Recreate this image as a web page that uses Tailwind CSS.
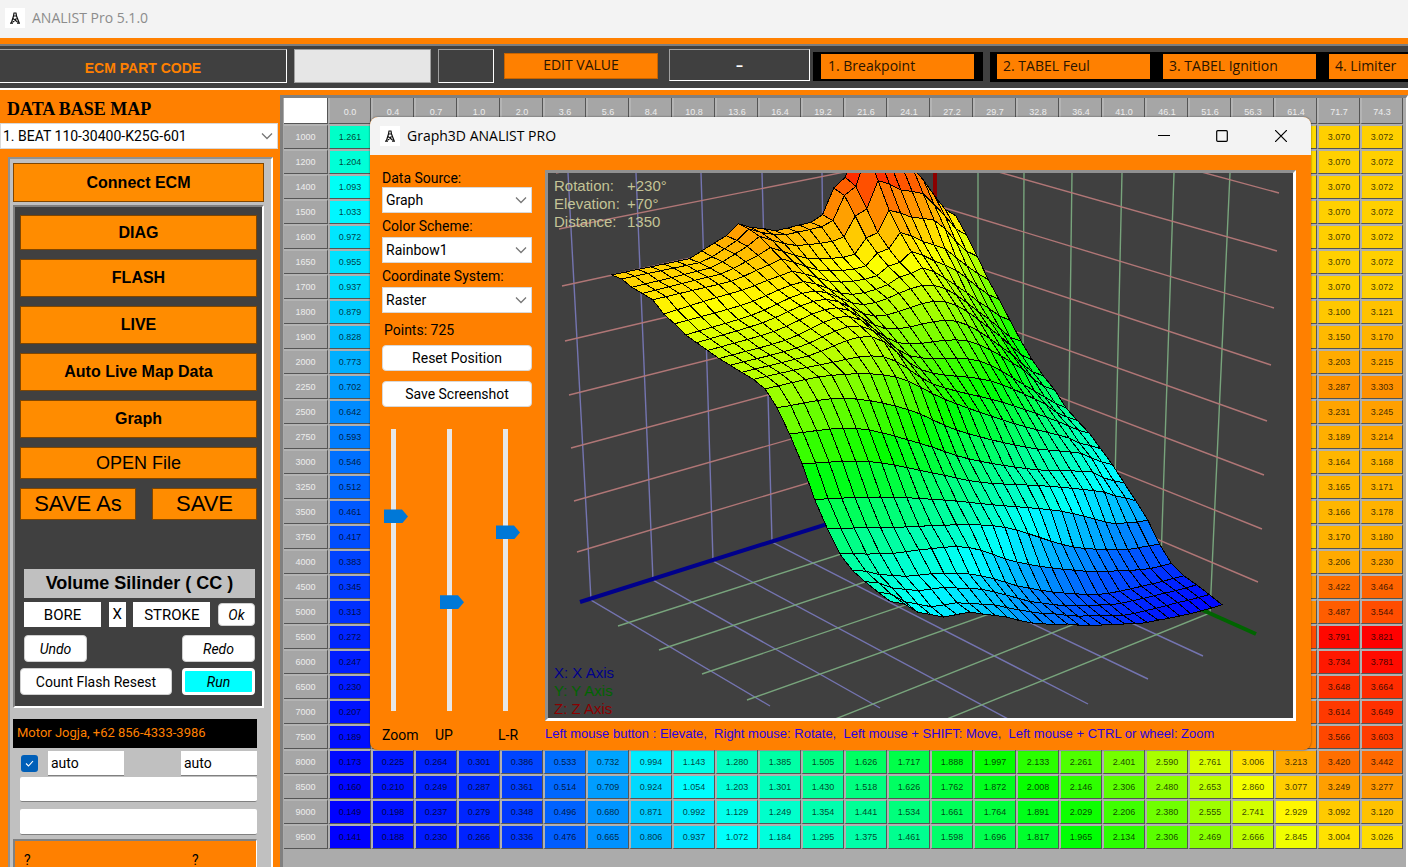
<!DOCTYPE html>
<html lang="en">
<head>
    <meta charset="UTF-8">
    <meta name="viewport" content="width=device-width, initial-scale=1.0">
    <title>ANALIST Pro 5.1.0</title>
    <script src="https://cdn.jsdelivr.net/npm/@tailwindcss/browser@4"></script>
</head>
<body class="relative h-screen overflow-hidden flex flex-col bg-[#ff8000] font-['Roboto',sans-serif] text-sm text-black">

    <!-- Shared icons -->
    <svg class="hidden">
        <symbol id="logo" viewBox="0 0 20 20">
            <path d="M0 0h20v20H0z" fill="#fff"/>
            <path d="M8.500 5h3M9 5l-.5 3h3L11 5M8.500 8L6.500 14.500M11.500 8l2.500 6.500M8 10.500l4.500 3.500M11.500 10.500L8 14M5 15.200h3M12 15.200h3" fill="none" stroke="#111" stroke-width="1.200"/>
        </symbol>
        <symbol id="chevron" viewBox="0 0 12 8">
            <path d="M1 1.500l5 5 5-5" fill="none" stroke="#777" stroke-width="1.300"/>
        </symbol>
    </svg>

    <!-- Title bar -->
    <header class="h-[38px] shrink-0 flex items-start gap-[7px] pl-[5px] pt-2 bg-[#f3f3f3] font-['Open_Sans',sans-serif] text-[#8c8c8c]">
        <svg class="size-5"><use href="#logo"/></svg>
        <h1 class="leading-5">ANALIST Pro 5.1.0</h1>
    </header>

    <!-- Toolbar -->
    <nav class="mt-[6px] h-[46px] shrink-0 flex items-start overflow-hidden bg-[#404040] border-t-2 border-t-[#7d7d7d] border-b-2 border-b-white pt-[3px] font-['Open_Sans',sans-serif]">
        <div class="w-[287px] h-[34px] shrink-0 flex items-center justify-center border-t border-t-[#a0a0a0] border-r border-b border-white font-['Liberation_Sans',sans-serif] font-bold text-[#ff8000] pt-1">ECM PART CODE</div>
        <input type="text" aria-label="Part code" class="ml-[7px] w-[137px] h-[34px] shrink-0 bg-[#e6e6e6] border border-[#a0a0a0]">
        <div class="ml-[7px] w-[56px] h-[34px] shrink-0 border border-[#a0a0a0] border-r-white border-b-white"></div>
        <button class="ml-[10px] mt-1 w-[154px] h-[26px] shrink-0 bg-[#ff8000] border border-[#c86400] pb-[2px] text-[#2a1400]">EDIT VALUE</button>
        <div class="ml-[11px] w-[141px] h-[32px] shrink-0 flex items-center justify-center border border-[#a0a0a0] border-r-white border-b-white text-white font-bold">–</div>
        <div class="ml-[3px] mt-[3px] shrink-0 bg-black pl-2 pr-[9px] pt-[2px] h-[29px]">
            <button class="w-[153px] h-[25px] bg-[#ff8000] text-left pl-[7px] pb-[2px] text-[#2a1400]">1. Breakpoint</button>
        </div>
        <div class="ml-[7px] mt-[3px] shrink-0 bg-black pl-[7px] pt-[2px] h-[30px] flex gap-[13px]">
            <button class="w-[153px] h-[25px] bg-[#ff8000] text-left pl-[6px] pb-[2px] text-[#2a1400]">2. TABEL Feul</button>
            <button class="w-[153px] h-[25px] bg-[#ff8000] text-left pl-[6px] pb-[2px] text-[#2a1400]">3. TABEL Ignition</button>
            <button class="w-[153px] h-[25px] bg-[#ff8000] text-left pl-[6px] pb-[2px] text-[#2a1400]">4. Limiter</button>
        </div>
    </nav>

    <div class="flex-1 min-h-0 flex pt-[5px]">
        <!-- Sidebar -->
        <aside class="w-[280px] shrink-0 overflow-hidden">
            <h2 class="h-7 pl-[7px] flex items-center font-['Liberation_Serif',serif] font-bold text-lg">DATA BASE MAP</h2>
            <div class="relative w-[278px]">
                <select aria-label="Data base map" class="w-full h-[26px] appearance-none bg-white border border-[#d8d8d8] pl-[2px] text-sm leading-6">
                    <option>1. BEAT 110-30400-K25G-601</option>
                </select>
                <svg class="absolute right-[5px] top-[9px] w-3 h-2 pointer-events-none"><use href="#chevron"/></svg>
            </div>

            <div class="mt-2 ml-2 w-[265px] bg-[#c0c0c0] border-t-2 border-l-2 border-[#909090] border-r-2 border-r-white pt-1 pl-[3px] pr-2">
                <button class="block w-[251px] h-[39px] bg-[#ff8c00] border border-[#804600] font-['Liberation_Sans',sans-serif] text-base font-bold">Connect ECM</button>

                <div class="mt-[3px] w-[251px] h-[503px] bg-[#404040] border-t-2 border-l-2 border-[#808080] border-r-2 border-b-2 border-r-white border-b-white pt-2 pl-[5px] pr-[5px]">
                    <div class="flex flex-col gap-[9px] font-['Liberation_Sans',sans-serif] text-base font-bold">
                        <button class="h-[35px] bg-[#ff8c00] border border-[#804600]">DIAG</button>
                        <button class="h-[38px] bg-[#ff8c00] border border-[#804600]">FLASH</button>
                        <button class="h-[38px] bg-[#ff8c00] border border-[#804600]">LIVE</button>
                        <button class="h-[38px] bg-[#ff8c00] border border-[#804600]">Auto Live Map Data</button>
                        <button class="h-[38px] bg-[#ff8c00] border border-[#804600]">Graph</button>
                        <button class="h-[32px] bg-[#ff8c00] border border-[#804600] text-lg font-normal leading-7">OPEN File</button>
                        <div class="flex justify-between text-[22px] font-normal">
                            <button class="w-[116px] h-[32px] bg-[#ff8c00] border border-[#804600] leading-7">SAVE As</button>
                            <button class="w-[105px] h-[32px] bg-[#ff8c00] border border-[#804600] leading-7">SAVE</button>
                        </div>
                    </div>

                    <div class="mt-[49px] ml-1 mr-[2px]">
                        <h3 class="h-[29px] leading-7 bg-[#c0c0c0] text-center font-['Liberation_Sans',sans-serif] text-lg font-bold">Volume Silinder ( CC )</h3>
                        <div class="mt-1 flex items-center justify-between text-[15px]">
                            <input type="text" aria-label="Bore" value="BORE" class="w-[77px] h-[25px] bg-white text-center">
                            <span class="w-[17px] h-[25px] leading-6 bg-white text-center">X</span>
                            <input type="text" aria-label="Stroke" value="STROKE" class="w-[77px] h-[25px] bg-white text-center">
                            <button class="w-[37px] h-[23px] rounded bg-white border border-[#d0d0d0] italic text-sm">Ok</button>
                        </div>
                        <div class="mt-2 flex justify-between italic">
                            <button class="w-[63px] h-[27px] rounded bg-white border border-[#d0d0d0]">Undo</button>
                            <button class="w-[73px] h-[27px] rounded bg-white border border-[#d0d0d0]">Redo</button>
                        </div>
                    </div>
                    <div class="mt-[6px] mr-[2px] flex justify-between">
                        <button class="w-[152px] h-[27px] rounded bg-white border border-[#d0d0d0]">Count Flash Resest</button>
                        <button class="w-[73px] h-[27px] rounded bg-[#00ffff] border-3 border-white italic">Run</button>
                    </div>
                </div>

                <p class="mt-[11px] w-[244px] h-[29px] pl-1 leading-7 bg-black text-[#ff8000] text-[13px]">Motor Jogja, +62 856-4333-3986</p>
                <div class="mt-[3px] w-[244px] pl-2 flex items-center">
                    <label class="relative size-[17px]">
                        <input type="checkbox" checked aria-label="Auto" class="block size-[17px] appearance-none rounded-[3px] bg-[#005fb8]">
                        <svg class="absolute left-1 top-[5px] w-[9px] h-[7px] pointer-events-none" viewBox="0 0 9 7"><path d="M1 3.500l2.500 2.500L8 1" fill="none" stroke="#fff" stroke-width="1.100"/></svg>
                    </label>
                    <input type="text" aria-label="Mode 1" value="auto" class="ml-[10px] w-[76px] h-[25px] bg-white border-b border-[#808080] pl-[3px]">
                    <input type="text" aria-label="Mode 2" value="auto" class="ml-auto w-[76px] h-[25px] bg-white border-b border-[#808080] pl-[3px]">
                </div>
                <input type="text" aria-label="Line 1" class="block mt-px ml-[7px] w-[237px] h-[25px] rounded-xs bg-white border-b border-[#808080]">
                <input type="text" aria-label="Line 2" class="block mt-[7px] ml-[7px] w-[237px] h-[26px] rounded-xs bg-white border-b border-[#808080]">
                <div class="mt-1 w-[244px] h-10 bg-[#ff8000] border-t-2 border-l-2 border-[#808080] border-r border-r-white pt-[9px] pl-[9px] flex">
                    <span class="w-[168px]">?</span>
                    <span>?</span>
                </div>
            </div>
        </aside>

        <!-- Map grid -->
        <main class="flex-1 min-w-0 overflow-hidden bg-[#ababab] border-t-3 border-l-3 border-[#808080] border-r-2 border-r-white pl-px">
            <table class="table-fixed w-[1119px] border-separate border-spacing-0 font-['Liberation_Sans',sans-serif] text-[9px] text-center">
                <thead>
                    <tr id="load-row" class="h-[26px]">
                        <td class="w-[44px] bg-white border-r border-b border-[#555]"></td>
                    </tr>
                </thead>
                <tbody id="map-body"></tbody>
            </table>
        </main>
    </div>

    <!-- 3D graph window -->
    <section class="absolute left-[370px] top-[117px] w-[941px] rounded-lg overflow-hidden bg-[#ff8000] shadow-[0_0_2px_rgba(0,0,0,0.6)]">
        <header class="h-[38px] flex items-center pl-[10px] bg-[#f3f3f3]">
            <svg class="size-5"><use href="#logo"/></svg>
            <h2 class="ml-[7px] font-['Open_Sans',sans-serif]">Graph3D ANALIST PRO</h2>
            <div class="ml-auto flex">
                <button aria-label="Minimize" class="w-[58px] h-[38px] flex items-center justify-center"><svg class="size-3" viewBox="0 0 12 12"><path d="M0 5.500h12" stroke="#000"/></svg></button>
                <button aria-label="Maximize" class="w-[58px] h-[38px] flex items-center justify-center"><svg class="size-3" viewBox="0 0 12 12"><rect x=".7" y=".7" width="10.600" height="10.600" rx="1" fill="none" stroke="#000" stroke-width="1.200"/></svg></button>
                <button aria-label="Close" class="w-[60px] h-[38px] flex items-center justify-center"><svg class="size-3" viewBox="0 0 12 12"><path d="M0 0l12 12M12 0L0 12" stroke="#000" stroke-width="1.200"/></svg></button>
            </div>
        </header>

        <div class="flex pt-[15px] pr-[15px] pl-3">
            <div class="w-[150px] shrink-0 mr-[13px] flex flex-col">
                <label for="source" class="h-[17px] leading-4">Data Source:</label>
                <div class="relative">
                    <select id="source" class="w-full h-[26px] appearance-none bg-white border border-[#d8d8d8] pl-[3px] leading-6"><option>Graph</option></select>
                    <svg class="absolute right-[5px] top-[9px] w-3 h-2 pointer-events-none"><use href="#chevron"/></svg>
                </div>
                <label for="scheme" class="mt-1 h-[20px] leading-[18px]">Color Scheme:</label>
                <div class="relative">
                    <select id="scheme" class="w-full h-[26px] appearance-none bg-white border border-[#d8d8d8] pl-[3px] leading-6"><option>Rainbow1</option></select>
                    <svg class="absolute right-[5px] top-[9px] w-3 h-2 pointer-events-none"><use href="#chevron"/></svg>
                </div>
                <label for="coords" class="mt-1 h-[20px] leading-[18px]">Coordinate System:</label>
                <div class="relative">
                    <select id="coords" class="w-full h-[26px] appearance-none bg-white border border-[#d8d8d8] pl-[3px] leading-6"><option>Raster</option></select>
                    <svg class="absolute right-[5px] top-[9px] w-3 h-2 pointer-events-none"><use href="#chevron"/></svg>
                </div>
                <p class="mt-[7px] pl-[2px] leading-5">Points: 725</p>
                <button class="mt-[5px] h-[26px] rounded bg-white border border-[#d8d8d8]">Reset Position</button>
                <button class="mt-[10px] h-[26px] rounded bg-white border border-[#d8d8d8]">Save Screenshot</button>
                <div class="mt-[22px] ml-[2px] flex gap-8">
                    <input id="zoom" type="range" min="0" max="100" value="30" class="w-6 h-[282px] appearance-none [writing-mode:vertical-lr] bg-[linear-gradient(#e7e7e7,#e7e7e7)] bg-[length:5px_100%] bg-[position:7px_0] bg-no-repeat [&::-webkit-slider-thumb]:appearance-none [&::-webkit-slider-thumb]:w-6 [&::-webkit-slider-thumb]:h-[14px] [&::-webkit-slider-thumb]:bg-[#0078d7] [&::-webkit-slider-thumb]:[clip-path:polygon(0_0,75%_0,100%_50%,75%_100%,0_100%)]">
                    <input id="up" type="range" min="0" max="100" value="62" class="w-6 h-[282px] appearance-none [writing-mode:vertical-lr] bg-[linear-gradient(#e7e7e7,#e7e7e7)] bg-[length:5px_100%] bg-[position:7px_0] bg-no-repeat [&::-webkit-slider-thumb]:appearance-none [&::-webkit-slider-thumb]:w-6 [&::-webkit-slider-thumb]:h-[14px] [&::-webkit-slider-thumb]:bg-[#0078d7] [&::-webkit-slider-thumb]:[clip-path:polygon(0_0,75%_0,100%_50%,75%_100%,0_100%)]">
                    <input id="lr" type="range" min="0" max="100" value="36" class="w-6 h-[282px] appearance-none [writing-mode:vertical-lr] bg-[linear-gradient(#e7e7e7,#e7e7e7)] bg-[length:5px_100%] bg-[position:7px_0] bg-no-repeat [&::-webkit-slider-thumb]:appearance-none [&::-webkit-slider-thumb]:w-6 [&::-webkit-slider-thumb]:h-[14px] [&::-webkit-slider-thumb]:bg-[#0078d7] [&::-webkit-slider-thumb]:[clip-path:polygon(0_0,75%_0,100%_50%,75%_100%,0_100%)]">
                </div>
            </div>

            <div class="relative flex-1 bg-[#404040] border-3 border-[#909090] border-r-white border-b-white">
                <svg id="plot" class="block w-full" viewBox="548 173 745 545">
                    <!-- left wall and floor, lines across X -->
                    <path fill="none" stroke="#7474b0" stroke-width="1.400" d="M568 173L591 600L770 706M636 173L653 580L880 708M701 173L713 561L1010 720M762 173L772 542L1088 704M822 173L827 526L1148 679M880 173L882 508L1203 656"/>
                    <!-- right wall and floor, lines across Y -->
                    <path fill="none" stroke="#78a47c" stroke-width="1.400" d="M978 173L978 510L618 626M1024 173L1022 530L659 650M1072 173L1067 550L702 674M1122 173L1113 570L747 700M1174 173L1160 590L800 733M1230 173L1210 613L855 756"/>
                    <!-- height levels on both walls -->
                    <path fill="none" stroke="#b07676" stroke-width="1.400" d="M556 173L935 100L1279 193M559 229L935 154L1277 251M562 286L935 205L1274 308M565 341L935 254L1271 365M569 395L935 303L1267 421M571 448L935 350L1264 475M574 501L935 398L1262 529M577 552L935 445L1258 582"/>
                    <path d="M935 173V490" stroke="#8b0000" stroke-width="4"/>
                    <path d="M580 602L935 490" stroke="#00008b" stroke-width="4"/>
                    <path d="M935 490L1256 634" stroke="#006400" stroke-width="4"/>
                    <g id="surface" stroke="#000" stroke-width="1" shape-rendering="crispEdges"></g>
                </svg>
                <div class="absolute left-[6px] top-1 grid grid-cols-[73px_auto] font-['Liberation_Sans',sans-serif] text-[15px] leading-[18px] text-[#c4c496]">
                    <span>Rotation:</span><span>+230°</span>
                    <span>Elevation:</span><span>+70°</span>
                    <span>Distance:</span><span>1350</span>
                </div>
                <div class="absolute left-[6px] bottom-0 font-['Liberation_Sans',sans-serif] text-[15px] leading-[18px]">
                    <p class="text-[#00008b]">X: X Axis</p>
                    <p class="text-[#006400]">Y: Y Axis</p>
                    <p class="text-[#8b0000]">Z: Z Axis</p>
                </div>
            </div>
        </div>

        <footer class="h-[29px] flex items-center pl-3 pb-[2px] whitespace-pre">
            <label for="zoom" class="w-[53px]">Zoom</label>
            <label for="up" class="w-[63px]">UP</label>
            <label for="lr" class="w-[47px]">L-R</label>
            <p class="font-['Liberation_Sans',sans-serif] text-[13px] text-[#2a00e0]">Left mouse button : Elevate,  Right mouse: Rotate,  Left mouse + SHIFT: Move,  Left mouse + CTRL or wheel: Zoom</p>
        </footer>
    </section>

    <script>
        const LOADS = ['0.0', '0.4', '0.7', '1.0', '2.0', '3.6', '5.6', '8.4', '10.8', '13.6', '16.4', '19.2', '21.6', '24.1', '27.2', '29.7', '32.8', '36.4', '41.0', '46.1', '51.6', '56.3', '61.4', '71.7', '74.3'];
        const RPMS = [1000, 1200, 1400, 1500, 1600, 1650, 1700, 1800, 1900, 2000, 2250, 2500, 2750, 3000, 3250, 3500, 3750, 4000, 4500, 5000, 5500, 6000, 6500, 7000, 7500, 8000, 8500, 9000, 9500];

        // Rows of the map given in full; the ones between are interpolated
        const KEY_ROWS = {
            0: [1.261, 1.29, 1.325, 1.37, 1.46, 1.63, 1.83, 2.09, 2.30, 2.48, 2.60, 2.64, 2.66, 2.68, 2.70, 2.73, 2.76, 2.79, 2.85, 2.90, 2.99, 3.01, 3.03, 3.07, 3.072],
            5: [0.955, 0.985, 1.07, 1.14, 1.295, 1.46, 1.68, 1.945, 2.19, 2.41, 2.57, 2.62, 2.66, 2.69, 2.72, 2.76, 2.80, 2.83, 2.88, 2.95, 3.0, 3.03, 3.05, 3.07, 3.072],
            10: [0.702, 0.765, 0.853, 0.945, 1.15, 1.305, 1.48, 1.68, 1.90, 2.16, 2.41, 2.55, 2.69, 2.75, 2.80, 2.84, 2.88, 2.92, 2.97, 3.03, 3.11, 3.18, 3.25, 3.287, 3.303],
            14: [0.512, 0.55, 0.596, 0.68, 0.87, 1.14, 1.30, 1.46, 1.63, 1.85, 2.09, 2.19, 2.28, 2.37, 2.45, 2.54, 2.62, 2.69, 2.75, 2.83, 2.9, 2.98, 3.08, 3.165, 3.171],
            20: [0.272, 0.30, 0.345, 0.39, 0.56, 0.74, 1.03, 1.22, 1.33, 1.5, 1.68, 1.84, 2.0, 2.15, 2.3, 2.45, 2.6, 2.72, 2.85, 2.97, 3.12, 3.30, 3.55, 3.791, 3.821],
            25: [0.173, 0.225, 0.264, 0.301, 0.386, 0.533, 0.732, 0.994, 1.143, 1.280, 1.385, 1.505, 1.626, 1.717, 1.888, 1.997, 2.133, 2.261, 2.401, 2.590, 2.761, 3.006, 3.213, 3.420, 3.442],
            26: [0.160, 0.210, 0.249, 0.287, 0.361, 0.514, 0.709, 0.924, 1.054, 1.203, 1.301, 1.430, 1.518, 1.626, 1.762, 1.872, 2.008, 2.146, 2.306, 2.480, 2.653, 2.860, 3.077, 3.249, 3.277],
            27: [0.149, 0.198, 0.237, 0.279, 0.348, 0.496, 0.680, 0.871, 0.992, 1.129, 1.249, 1.354, 1.441, 1.534, 1.661, 1.764, 1.891, 2.029, 2.206, 2.380, 2.555, 2.741, 2.929, 3.092, 3.120],
            28: [0.141, 0.188, 0.230, 0.266, 0.336, 0.476, 0.665, 0.806, 0.937, 1.072, 1.184, 1.295, 1.375, 1.461, 1.598, 1.696, 1.817, 1.965, 2.134, 2.306, 2.469, 2.666, 2.845, 3.004, 3.026]
        };
        const FIRST_COL = [1.261, 1.204, 1.093, 1.033, 0.972, 0.955, 0.937, 0.879, 0.828, 0.773, 0.702, 0.642, 0.593, 0.546, 0.512, 0.461, 0.417, 0.383, 0.345, 0.313, 0.272, 0.247, 0.230, 0.207, 0.189, 0.173, 0.160, 0.149, 0.141];
        const COL_71 = [3.070, 3.070, 3.070, 3.070, 3.070, 3.070, 3.070, 3.100, 3.150, 3.203, 3.287, 3.231, 3.189, 3.164, 3.165, 3.166, 3.170, 3.206, 3.422, 3.487, 3.791, 3.734, 3.648, 3.614, 3.566, 3.420, 3.249, 3.092, 3.004];
        const COL_74 = [3.072, 3.072, 3.072, 3.072, 3.072, 3.072, 3.072, 3.121, 3.170, 3.215, 3.303, 3.245, 3.214, 3.168, 3.171, 3.178, 3.180, 3.230, 3.464, 3.544, 3.821, 3.781, 3.664, 3.649, 3.603, 3.442, 3.277, 3.120, 3.026];
        const KEYS = Object.keys(KEY_ROWS).map(Number);

        function slope(k, c) {
            const a = KEYS[Math.max(k - 1, 0)];
            const b = KEYS[Math.min(k + 1, KEYS.length - 1)];
            return (KEY_ROWS[b][c] - KEY_ROWS[a][c]) / (b - a);
        }

        function interpolate(r, c) {
            let k = 0;
            while (k < KEYS.length - 2 && KEYS[k + 1] <= r) k++;
            const span = KEYS[k + 1] - KEYS[k];
            const t = (r - KEYS[k]) / span;
            const t2 = t * t, t3 = t2 * t;
            return (2 * t3 - 3 * t2 + 1) * KEY_ROWS[KEYS[k]][c] + (t3 - 2 * t2 + t) * span * slope(k, c)
                + (3 * t2 - 2 * t3) * KEY_ROWS[KEYS[k + 1]][c] + (t3 - t2) * span * slope(k + 1, c);
        }

        const map = RPMS.map((rpm, r) => LOADS.map((load, c) => {
            if (KEY_ROWS[r]) return KEY_ROWS[r][c];
            if (c === 0) return FIRST_COL[r];
            if (c === 23) return COL_71[r];
            if (c === 24) return COL_74[r];
            const high = COL_71[r] - interpolate(r, 23);
            const low = FIRST_COL[r] - interpolate(r, 0);
            return interpolate(r, c) + high * Math.max(0, 1 - (23 - c) / 6) + low * Math.max(0, 1 - c / 5);
        }));

        // Blue, cyan, green, yellow, red
        function rainbow(value) {
            const t = Math.min(4, Math.max(0, (value - 0.141) / 0.92));
            const up = Math.round(255 * (t % 1));
            if (t < 1) return `rgb(0,${up},255)`;
            if (t < 2) return `rgb(0,255,${255 - up})`;
            if (t < 3) return `rgb(${up},255,0)`;
            if (t < 4) return `rgb(255,${255 - up},0)`;
            return 'rgb(255,0,0)';
        }

        // Map table
        document.getElementById('load-row').innerHTML += LOADS.map(load =>
            `<th scope="col" class="w-[43px] pt-1 bg-[#a6a6a6] border-l-2 border-l-[#b4b4b4] border-r border-b border-r-[#555] border-b-[#555] text-[#ededed] font-normal">${load}</th>`).join('');
        document.getElementById('map-body').innerHTML = map.map((row, r) => `
            <tr class="h-[25px]">
                <th scope="row" class="bg-[#a6a6a6] border-t-2 border-t-[#b4b4b4] border-r border-b border-r-[#555] border-b-[#555] text-[#ededed] font-normal">${RPMS[r]}</th>
                ${row.map(v => `<td class="border-t-2 border-l-2 border-t-[#b0b0b0] border-l-[#b0b0b0] border-r border-b border-r-[#555] border-b-[#555] text-black/75" style="background-color:${rainbow(v)}">${v.toFixed(3)}</td>`).join('')}
            </tr>`).join('');

        // Surface, seen from 20 degrees above the floor
        const SIDE = 433, DEPTH = 2300;
        function project(r, c) {
            const u = r / 28 - 0.5;
            const v = (24 - c) / 24 - 0.5;
            const z = 113 * map[r][c] - 177.4;
            const x = SIDE * (0.766 * u + 0.643 * v);
            const near = SIDE * (0.766 * v - 0.643 * u);
            const w = 1 - (0.94 * near + 0.342 * z) / DEPTH;
            return (921 + x / w).toFixed(1) + ',' + (446 + (0.342 * near - 0.94 * z) / w).toFixed(1);
        }

        let quads = '';
        for (let r = 27; r >= 0; r--) {
            for (let c = 23; c >= 0; c--) {
                const mean = (map[r][c] + map[r + 1][c] + map[r][c + 1] + map[r + 1][c + 1]) / 4;
                quads += `<polygon fill="${rainbow(mean)}" points="${project(r, c)} ${project(r + 1, c)} ${project(r + 1, c + 1)} ${project(r, c + 1)}"/>`;
            }
        }
        document.getElementById('surface').innerHTML = quads;
    </script>
</body>
</html>
